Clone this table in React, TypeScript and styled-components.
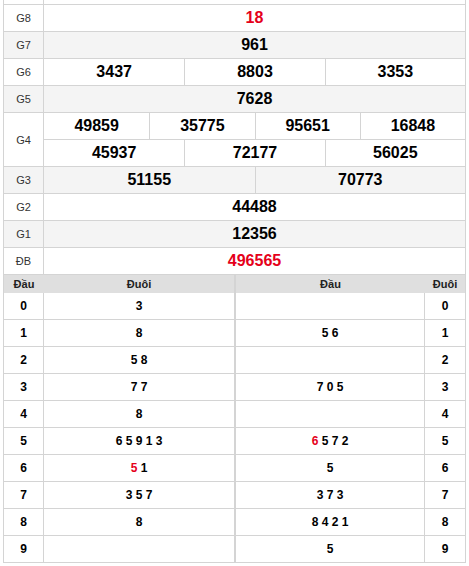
import React from "react";
import styled, { createGlobalStyle } from "styled-components";

const GlobalStyle = createGlobalStyle`
  html, body {
    margin: 0;
    padding: 0;
    background: #ffffff;
  }
  body {
    font-family: "Liberation Sans", Arial, sans-serif;
    color: #000;
  }
  * { box-sizing: border-box; }
`;

const LINE = "#d4d4d4";
const ALT = "#f4f4f4";
const RED = "#e5001a";

const Page = styled.div`
  padding: 0 3px;
  width: 469px;
`;

const Board = styled.div`
  border-left: 1px solid ${LINE};
  border-right: 1px solid ${LINE};
`;

const Stub = styled.div`
  display: grid;
  grid-template-columns: 40px 1fr;
  height: 5px;
  border-bottom: 1px solid ${LINE};
`;

const StubCell = styled.div`
  border-right: 1px solid ${LINE};
`;

const PrizeRow = styled.div<{ $alt?: boolean }>`
  display: grid;
  grid-template-columns: 40px 1fr;
  border-bottom: 1px solid ${LINE};
  background: ${(p) => (p.$alt ? ALT : "#fff")};
`;

const Label = styled.div`
  display: flex;
  align-items: center;
  justify-content: center;
  border-right: 1px solid ${LINE};
  font-size: 11px;
  color: #333;
`;

const Values = styled.div`
  display: flex;
  flex-direction: column;
`;

const Line = styled.div<{ $n: number }>`
  display: grid;
  grid-template-columns: repeat(${(p) => p.$n}, 1fr);
  height: 26px;
  & + & {
    height: 27px;
    border-top: 1px solid ${LINE};
  }
`;

const Num = styled.div<{ $red?: boolean }>`
  display: flex;
  align-items: center;
  justify-content: center;
  font-size: 16px;
  font-weight: bold;
  color: ${(p) => (p.$red ? RED : "#000")};
  & + & {
    border-left: 1px solid ${LINE};
  }
`;

const Lower = styled.div`
  display: grid;
  grid-template-columns: 232px 1fr;
`;

const Panel = styled.div`
  border-left: 1px solid ${LINE};
  border-right: 1px solid ${LINE};
`;

const PanelRow = styled.div<{ $cols: string }>`
  display: grid;
  grid-template-columns: ${(p) => p.$cols};
  height: 27px;
  border-bottom: 1px solid ${LINE};
`;

const PanelHead = styled.div<{ $cols: string }>`
  display: grid;
  grid-template-columns: ${(p) => p.$cols};
  height: 18px;
  background: #dfdfdf;
`;

const HeadCell = styled.div`
  display: flex;
  align-items: center;
  justify-content: center;
  font-size: 11px;
  font-weight: bold;
  color: #222;
`;

const Cell = styled.div<{ $divider?: boolean }>`
  display: flex;
  align-items: center;
  justify-content: center;
  font-size: 12px;
  font-weight: bold;
  color: #000;
  white-space: pre;
  ${(p) => (p.$divider ? `border-right: 1px solid ${LINE};` : "")}
`;

const Red = styled.span`
  color: ${RED};
`;

type Prize = { label: string; lines: string[][]; red?: boolean };

const prizes: Prize[] = [
  { label: "G8", lines: [["18"]], red: true },
  { label: "G7", lines: [["961"]] },
  { label: "G6", lines: [["3437", "8803", "3353"]] },
  { label: "G5", lines: [["7628"]] },
  { label: "G4", lines: [["49859", "35775", "95651", "16848"], ["45937", "72177", "56025"]] },
  { label: "G3", lines: [["51155", "70773"]] },
  { label: "G2", lines: [["44488"]] },
  { label: "G1", lines: [["12356"]] },
  { label: "ĐB", lines: [["496565"]], red: true },
];

type Val = { red?: string; rest: string };

const leftTails: Val[] = [
  { rest: "3" },
  { rest: "8" },
  { rest: "5 8" },
  { rest: "7 7" },
  { rest: "8" },
  { rest: "6 5 9 1 3" },
  { red: "5", rest: " 1" },
  { rest: "3 5 7" },
  { rest: "8" },
  { rest: "" },
];

const rightHeads: Val[] = [
  { rest: "" },
  { rest: "5 6" },
  { rest: "" },
  { rest: "7 0 5" },
  { rest: "" },
  { red: "6", rest: " 5 7 2" },
  { rest: "5" },
  { rest: "3 7 3" },
  { rest: "8 4 2 1" },
  { rest: "5" },
];

const renderVal = (v: Val) => (
  <>
    {v.red ? <Red>{v.red}</Red> : null}
    {v.rest}
  </>
);

const LEFT_COLS = "40px 1fr";
const RIGHT_COLS = "1fr 40px";

export default function App() {
  return (
    <Page>
      <GlobalStyle />
      <Board>
        <Stub>
          <StubCell />
          <div />
        </Stub>
        {prizes.map((p, i) => (
          <PrizeRow key={p.label} $alt={i % 2 === 1}>
            <Label>{p.label}</Label>
            <Values>
              {p.lines.map((line, li) => (
                <Line key={li} $n={line.length}>
                  {line.map((n) => (
                    <Num key={n} $red={p.red}>
                      {n}
                    </Num>
                  ))}
                </Line>
              ))}
            </Values>
          </PrizeRow>
        ))}
      </Board>
      <Lower>
        <Panel>
          <PanelHead $cols={LEFT_COLS}>
            <HeadCell>Đầu</HeadCell>
            <HeadCell>Đuôi</HeadCell>
          </PanelHead>
          {leftTails.map((v, i) => (
            <PanelRow key={i} $cols={LEFT_COLS}>
              <Cell $divider>{i}</Cell>
              <Cell>{renderVal(v)}</Cell>
            </PanelRow>
          ))}
        </Panel>
        <Panel>
          <PanelHead $cols={RIGHT_COLS}>
            <HeadCell>Đầu</HeadCell>
            <HeadCell>Đuôi</HeadCell>
          </PanelHead>
          {rightHeads.map((v, i) => (
            <PanelRow key={i} $cols={RIGHT_COLS}>
              <Cell $divider>{renderVal(v)}</Cell>
              <Cell>{i}</Cell>
            </PanelRow>
          ))}
        </Panel>
      </Lower>
    </Page>
  );
}
